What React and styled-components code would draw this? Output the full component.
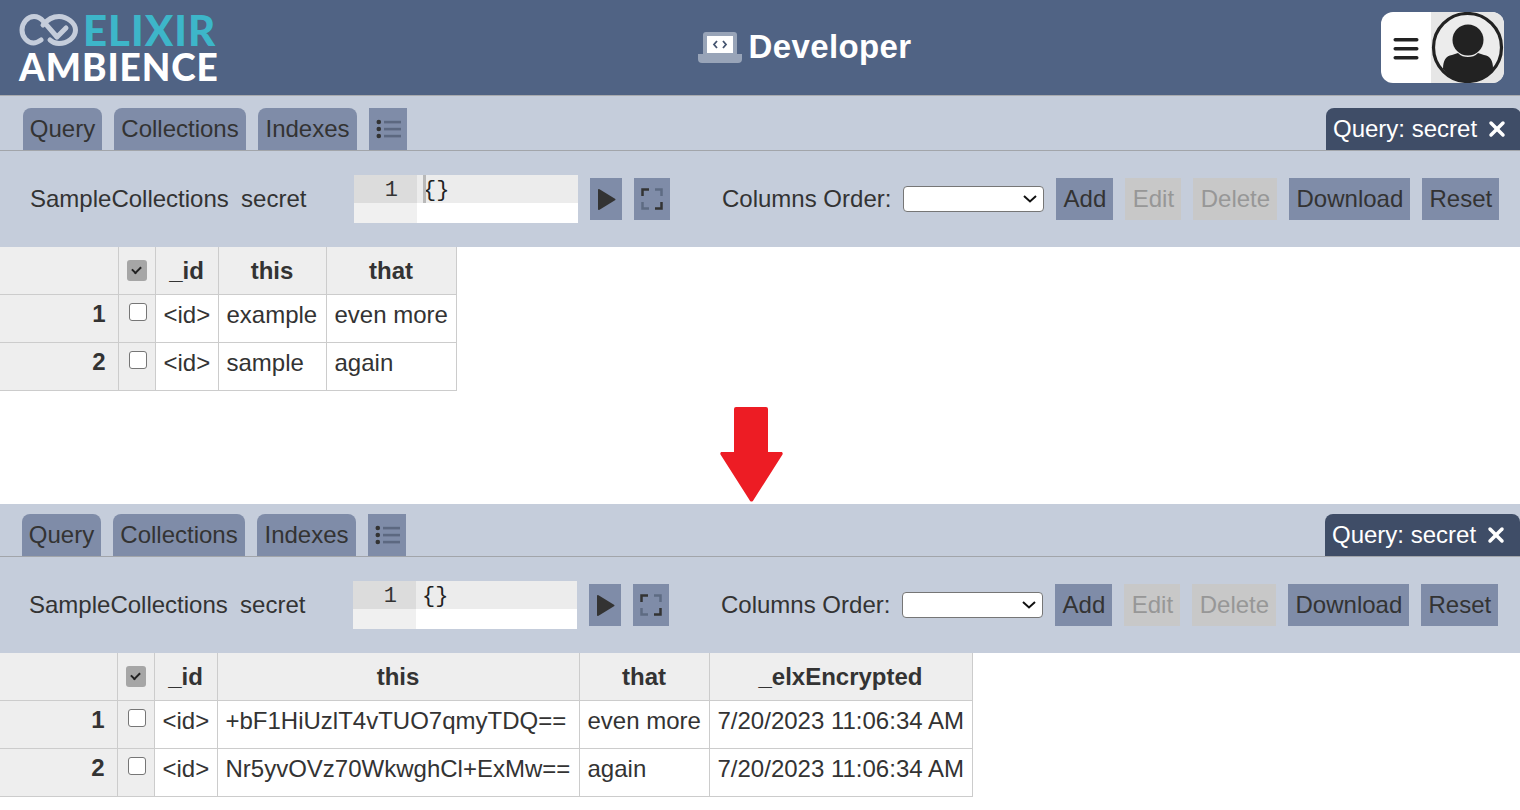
import styled, { createGlobalStyle } from 'styled-components';
import { X } from 'lucide-react';

const GlobalStyle = createGlobalStyle`
  html, body {
    margin: 0;
    padding: 0;
    background: #fff;
    overflow: hidden;
  }
  body {
    font-family: "Liberation Sans", Arial, sans-serif;
    font-size: 24px;
    color: #333;
  }
`;

const firstRows = [
  ['<id>', 'example', 'even more'],
  ['<id>', 'sample', 'again'],
];

const secondRows = [
  ['<id>', '+bF1HiUzlT4vTUO7qmyTDQ==', 'even more', '7/20/2023 11:06:34 AM'],
  ['<id>', 'Nr5yvOVz70WkwghCl+ExMw==', 'again', '7/20/2023 11:06:34 AM'],
];

const Logo = () => (
  <LogoBox>
    <LogoTop>
      <svg width="60" height="36" viewBox="0 0 60 36" fill="none" stroke="#c5cddb" strokeWidth="5" strokeLinecap="round" strokeLinejoin="round">
        <path d="M22 28C19 30 17 31 14.500 31 8.500 31 3 25 3 18 3 11 8.500 4.500 15 4.500c4 0 7 2 9.500 5L38 25l9-9" />
        <path d="M24 13c4-5 9-8.500 16-8.500C48 4.500 56.500 11 56.500 18 56.500 26 48 31.500 40 31.500c-4 0-7-1.500-9-3.500" />
      </svg>
      <LogoElixir>ELIXIR</LogoElixir>
    </LogoTop>
    <LogoAmbience>AMBIENCE</LogoAmbience>
  </LogoBox>
);

const LaptopIcon = () => (
  <svg width="44" height="31" viewBox="0 0 44 31">
    <rect x="5" y="0" width="34" height="25" rx="3" fill="#98a4b8" />
    <rect x="9" y="4" width="26" height="17" fill="#fff" />
    <path d="M0 22h44v5a4 4 0 0 1-4 4H4a4 4 0 0 1-4-4z" fill="#98a4b8" />
    <path d="M19 9l-3 3.500 3 3.500M25 9l3 3.500-3 3.500" fill="none" stroke="#44546f" strokeWidth="1.800" />
  </svg>
);

const MenuIcon = () => (
  <svg width="26" height="24" viewBox="0 0 26 24" fill="#222">
    <rect x="0.500" y="2" width="25" height="3.400" rx="1.700" />
    <rect x="0.500" y="11" width="25" height="3.400" rx="1.700" />
    <rect x="0.500" y="20" width="25" height="3.400" rx="1.700" />
  </svg>
);

const Avatar = () => (
  <svg width="73" height="71" viewBox="0 0 73 71">
    <rect width="73" height="71" fill="#e6e6e6" />
    <circle cx="36.500" cy="35.500" r="34" fill="#ececec" stroke="#222" strokeWidth="3.200" />
    <circle cx="37" cy="28" r="15.500" fill="#222" />
    <path d="M12 57c0-9 3-13 9-14l6-2c3 3 6 4 10 4s7-1 10-4l6 2c6 1 9 5 9 14-6 8-15 12.500-25 12.500S18 65 12 57z" fill="#222" />
  </svg>
);

const ListIcon = () => (
  <svg width="25" height="20" viewBox="0 0 25 20" fill="#5c6880">
    <circle cx="2.800" cy="3" r="2.300" fill="#333" />
    <circle cx="2.800" cy="10" r="2.300" fill="#333" />
    <circle cx="2.800" cy="17" r="2.300" fill="#333" />
    <rect x="8" y="1.800" width="17" height="2.600" />
    <rect x="8" y="8.800" width="17" height="2.600" />
    <rect x="8" y="15.800" width="17" height="2.600" />
  </svg>
);

const PlayIcon = () => (
  <svg width="19" height="23" viewBox="0 0 19 23">
    <path d="M1 2v19a1 1 0 0 0 1.500.8l15.500-9.500a1 1 0 0 0 0-1.600L2.500 1.200A1 1 0 0 0 1 2z" fill="#333" />
  </svg>
);

const ExpandIcon = () => (
  <svg width="22" height="22" viewBox="0 0 22 22" fill="none" strokeWidth="2.500">
    <path d="M1.500 8V1.500H8" stroke="#333" />
    <path d="M14 1.500h6.500V8" stroke="#5e6b82" />
    <path d="M1.500 14v6.500H8" stroke="#5e6b82" />
    <path d="M14 20.500h6.500V14" stroke="#333" />
  </svg>
);

const DownArrow = () => (
  <svg width="63" height="95" viewBox="0 0 63 95">
    <path d="M14 2a2 2 0 0 1 2-2h30a2 2 0 0 1 2 2v43h13c1.500 0 2 1 1.500 2.500L33.500 93c-1 2-3 2-4 0L.5 47.500C0 46 .5 45 2 45h12z" fill="#ed1c24" />
  </svg>
);

const Panel = ({ shift, headers, widths, rows }) => (
  <PanelBox $shift={shift}>
    <TabBar $shift={shift}>
      <Tab $width={79}>Query</Tab>
      <Tab $width={132}>Collections</Tab>
      <Tab $width={99}>Indexes</Tab>
      <ListTab><ListIcon /></ListTab>
      <ActiveTab>
        Query: secret
        <X size={24} strokeWidth={3.500} color="#fff" />
      </ActiveTab>
    </TabBar>
    <Toolbar>
      <CollectionName>SampleCollections&nbsp; secret</CollectionName>
      <Editor>
        <Gutter>
          <LineNumber>1</LineNumber>
        </Gutter>
        <EditorBody>
          <CodeLine $cursor={!shift}>{'{}'}</CodeLine>
        </EditorBody>
      </Editor>
      <IconButton $width={32}><PlayIcon /></IconButton>
      <IconButton $width={36}><ExpandIcon /></IconButton>
      <OrderLabel>Columns Order:</OrderLabel>
      <OrderSelect />
      <ActionButton $width={57}>Add</ActionButton>
      <ActionButton $width={56} disabled>Edit</ActionButton>
      <ActionButton $width={84} disabled>Delete</ActionButton>
      <ActionButton $width={121}>Download</ActionButton>
      <ActionButton $width={77}>Reset</ActionButton>
    </Toolbar>
    <TableArea>
      <DataTable>
        <colgroup>
          <col width="118" />
          <col width="37" />
          {widths.map((w, i) => <col key={i} width={w} />)}
        </colgroup>
        <thead>
          <tr>
            <HeadCell />
            <HeadCell><CheckedBox /></HeadCell>
            {headers.map((h) => <HeadCell key={h}>{h}</HeadCell>)}
          </tr>
        </thead>
        <tbody>
          {rows.map((row, i) => (
            <tr key={i}>
              <RowNumber>{i + 1}</RowNumber>
              <CheckCell><EmptyBox /></CheckCell>
              {row.map((v, j) => <Cell key={j}>{v}</Cell>)}
            </tr>
          ))}
        </tbody>
      </DataTable>
    </TableArea>
  </PanelBox>
);

export default function App() {
  return (
    <Page>
      <GlobalStyle />
      <Header>
        <Logo />
        <Title>
          <LaptopIcon />
          <TitleText>Developer</TitleText>
        </Title>
        <UserMenu>
          <MenuSide><MenuIcon /></MenuSide>
          <Avatar />
        </UserMenu>
      </Header>
      <Panel
        headers={['_id', 'this', 'that']}
        widths={[63, 108, 130]}
        rows={firstRows}
      />
      <ArrowRow><DownArrow /></ArrowRow>
      <Panel
        shift
        headers={['_id', 'this', 'that', '_elxEncrypted']}
        widths={[63, 362, 130, 263]}
        rows={secondRows}
      />
    </Page>
  );
}

const Page = styled.div`
  width: 1520px;
  height: 810px;
  overflow: hidden;
`;

const Header = styled.header`
  height: 95px;
  background: #506384;
  border-bottom: 1px solid #a9abaf;
  display: flex;
  align-items: center;
  justify-content: space-between;
  padding: 0 16px 0 19px;
`;

const LogoBox = styled.div`
  display: flex;
  flex-direction: column;
  width: 201px;
`;

const LogoTop = styled.div`
  display: flex;
  align-items: center;
  height: 38px;
  gap: 4px;
`;

const LogoElixir = styled.span`
  font-family: Lato, sans-serif;
  font-weight: 900;
  font-size: 42px;
  line-height: 38px;
  letter-spacing: 1px;
  color: #3db6c9;
`;

const LogoAmbience = styled.span`
  font-family: Lato, sans-serif;
  font-weight: 900;
  font-size: 37px;
  line-height: 36px;
  letter-spacing: 0.9px;
  color: #fff;
  white-space: nowrap;
`;

const Title = styled.div`
  display: flex;
  align-items: center;
  gap: 6px;
  margin-left: 9px;
`;

const TitleText = styled.span`
  font-weight: 700;
  font-size: 33px;
  letter-spacing: 0.4px;
  padding-bottom: 2px;
  color: #fff;
`;

const UserMenu = styled.div`
  display: flex;
  width: 123px;
  height: 71px;
  border-radius: 12px;
  overflow: hidden;
  background: #fff;
`;

const MenuSide = styled.div`
  flex: none;
  width: 50px;
  display: flex;
  align-items: center;
  justify-content: center;
`;

const PanelBox = styled.section`
  margin-left: ${(p) => (p.$shift ? '-1px' : '0')};
  width: 1521px;
`;

const TabBar = styled.div`
  height: ${(p) => (p.$shift ? '53px' : '55px')};
  background: #c5cddb;
  border-bottom: 1px solid #a2a5aa;
  box-sizing: border-box;
  display: flex;
  align-items: flex-end;
  gap: 12px;
  padding: 0 0 0 23px;
`;

const Tab = styled.div`
  width: ${(p) => p.$width}px;
  height: 42px;
  display: flex;
  align-items: center;
  justify-content: center;
  background: #7f8ca8;
  border-radius: 8px 8px 0 0;
  color: #333;
`;

const ListTab = styled.div`
  width: 38px;
  height: 42px;
  display: flex;
  align-items: center;
  justify-content: center;
  background: #7f8ca8;
`;

const ActiveTab = styled.div`
  margin-left: auto;
  width: 195px;
  box-sizing: border-box;
  height: 42px;
  padding: 0 0 0 7px;
  display: flex;
  align-items: center;
  gap: 8px;
  background: #3f4d67;
  border-radius: 8px 8px 0 0;
  color: #fff;
`;

const Toolbar = styled.div`
  height: 96px;
  background: #c5cddb;
  box-sizing: border-box;
  display: flex;
  align-items: center;
  padding: 0 21px 0 30px;
`;

const CollectionName = styled.span`
  width: 324px;
  flex: none;
  white-space: nowrap;
  word-spacing: -0.5px;
`;

const Editor = styled.div`
  flex: none;
  width: 224px;
  height: 48px;
  display: flex;
  background: #fff;
  font-family: "Liberation Mono", monospace;
  font-size: 22px;
  margin-right: 12px;
`;

const Gutter = styled.div`
  width: 63px;
  background: #f0f0f0;
`;

const LineNumber = styled.div`
  height: 28px;
  line-height: 32px;
  padding-right: 19px;
  text-align: right;
  background: #dcdcdc;
`;

const EditorBody = styled.div`
  flex: 1;
`;

const CodeLine = styled.div`
  position: relative;
  height: 28px;
  line-height: 31px;
  padding-left: 6px;
  background: #ececec;
  color: #222;

  &::before {
    content: "";
    display: ${(p) => (p.$cursor ? 'block' : 'none')};
    position: absolute;
    left: 6px;
    top: 0;
    width: 3px;
    height: 28px;
    background: #b9b9b9;
  }
`;

const IconButton = styled.button`
  flex: none;
  width: ${(p) => p.$width}px;
  height: 42px;
  margin-right: 12px;
  padding: 0;
  border: none;
  background: #7f8ca8;
  display: flex;
  align-items: center;
  justify-content: center;
`;

const OrderLabel = styled.span`
  margin-left: 40px;
  white-space: nowrap;
`;

const OrderSelect = styled.select`
  appearance: none;
  width: 141px;
  height: 26px;
  margin: 0 12px;
  flex: none;
  border: 1px solid #767676;
  border-radius: 4px;
  background: #fff url("data:image/svg+xml,%3Csvg xmlns='http://www.w3.org/2000/svg' width='14' height='8' viewBox='0 0 14 8'%3E%3Cpath d='M1 1l6 5.500L13 1' fill='none' stroke='%23111' stroke-width='2'/%3E%3C/svg%3E") no-repeat right 6px center;
`;

const ActionButton = styled.button`
  flex: none;
  width: ${(p) => p.$width}px;
  height: 42px;
  padding: 0;
  margin-right: 12px;
  border: none;
  font: inherit;
  background: ${(p) => (p.disabled ? '#c8c8c8' : '#7f8ca8')};
  color: ${(p) => (p.disabled ? '#979797' : '#333')};

  &:last-child {
    margin-right: 0;
  }
`;

const TableArea = styled.div`
  height: 144px;
`;

const DataTable = styled.table`
  border-collapse: collapse;
  table-layout: fixed;
  width: fit-content;
`;

const HeadCell = styled.th`
  height: 47px;
  padding: 2px 8px 0;
  background: #eee;
  border: 1px solid #ccc;
  border-top: none;
  border-left: none;
  font-weight: 700;
  text-align: center;
  box-sizing: border-box;
`;

const Cell = styled.td`
  height: 48px;
  padding: 0 8px 6px;
  border: 1px solid #ccc;
  border-left: none;
  background: #fff;
  white-space: nowrap;
  box-sizing: border-box;
`;

const RowNumber = styled(Cell)`
  background: #eee;
  font-weight: 700;
  text-align: right;
  padding: 0 12px 8px 0;
`;

const CheckCell = styled(Cell)`
  background: #eee;
  vertical-align: top;
  padding: 8px 0 0 10px;
`;

const EmptyBox = styled.span`
  display: block;
  box-sizing: border-box;
  width: 18px;
  height: 18px;
  background: #fff;
  border: 1px solid #767676;
  border-radius: 3px;
`;

const CheckedBox = styled.span`
  display: flex;
  width: 20px;
  height: 21px;
  margin: -2px auto 0;
  background: #a6a6a6;
  border-radius: 3px;
  align-items: center;
  justify-content: center;

  &::after {
    content: "";
    width: 7px;
    height: 4px;
    margin-top: -2px;
    border-left: 2px solid #222;
    border-bottom: 2px solid #222;
    transform: rotate(-45deg);
  }
`;

const ArrowRow = styled.div`
  height: 113px;
  box-sizing: border-box;
  padding: 16px 0 0 720px;
  display: flex;
`;
